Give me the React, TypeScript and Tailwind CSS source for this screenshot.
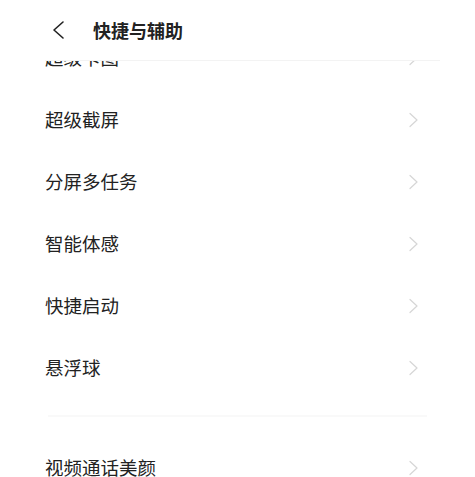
const items = ["超级卡图", "超级截屏", "分屏多任务", "智能体感", "快捷启动", "悬浮球"];

function Chevron() {
  return (
    <svg width="11" height="16" viewBox="0 0 11 16" fill="none" className="shrink-0">
      <path d="M2 1.5 L9 8 L2 14.5" stroke="#d6d6d6" strokeWidth="1.2" strokeLinecap="round" strokeLinejoin="round" />
    </svg>
  );
}

function Row({ label }: { label: string }) {
  return (
    <div className="flex h-[62px] items-center justify-between pl-[45px] pr-[56px]">
      <span className="text-[18.5px] text-[#222222]">{label}</span>
      <Chevron />
    </div>
  );
}

export default function App() {
  return (
    <div
      className="relative h-[477px] w-[475px] overflow-hidden bg-white"
      style={{ fontFamily: '"Noto Sans CJK SC", "Noto Sans", sans-serif' }}
    >
      <div className="flex flex-col pt-[27px]">
        {items.map((label) => (
          <Row key={label} label={label} />
        ))}
        <div className="mx-[48px] mt-[16px] mb-[20px] h-[2px] bg-[#f9f9f9]" />
        <Row label="视频通话美颜" />
      </div>

      <div className="absolute inset-x-0 top-0 h-[61px] bg-white">
        <div className="flex h-[60px] items-center pl-[50px]">
          <svg width="16" height="20" viewBox="0 0 16 20" fill="none">
            <path d="M13 2 L4 10 L13 18" stroke="#222222" strokeWidth="1.6" strokeLinecap="round" strokeLinejoin="round" />
          </svg>
          <span className="ml-[27px] text-[18px] font-semibold text-[#222222]">快捷与辅助</span>
        </div>
        <div className="ml-[45px] mr-[35px] h-px bg-[#f3f3f3]" />
      </div>
    </div>
  );
}
